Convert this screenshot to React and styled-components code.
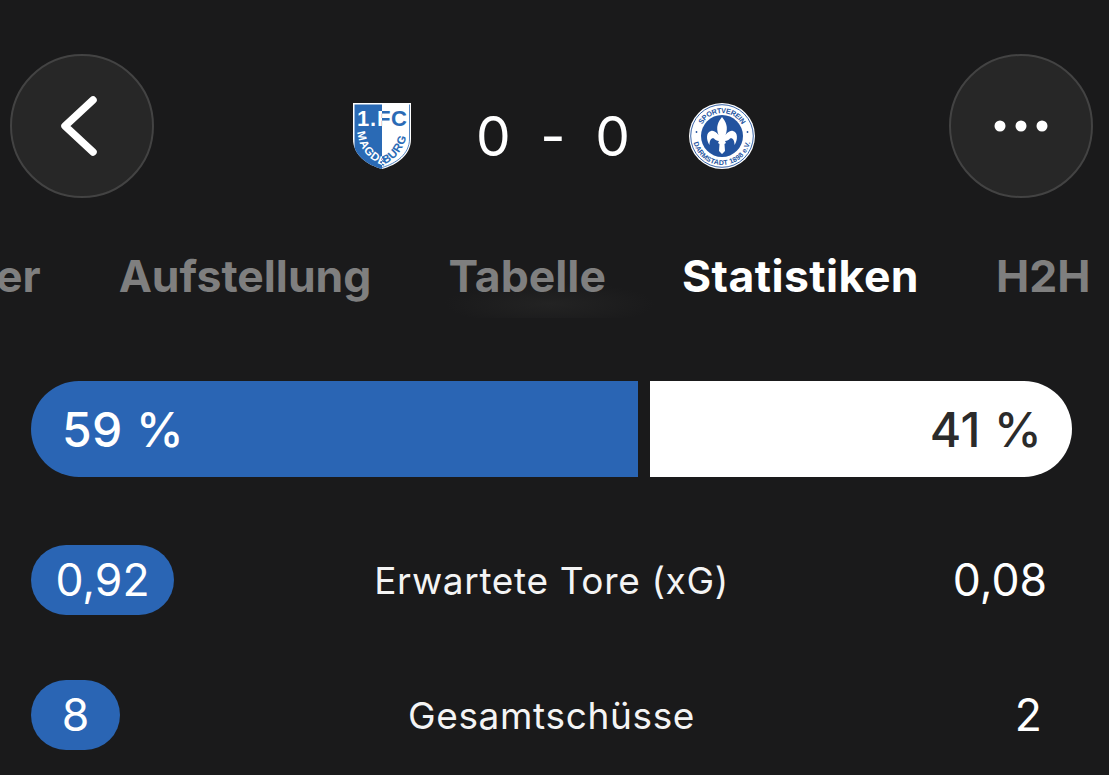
import React from "react";
import styled, { createGlobalStyle } from "styled-components";

const Global = createGlobalStyle`
  html, body { margin: 0; padding: 0; background: #1a1a1b; }
  body { font-family: Inter, "Noto Sans", "Liberation Sans", sans-serif; color: #fff; }
`;

const Page = styled.div`
  width: 1109px;
  height: 775px;
  overflow: hidden;
  background: #1a1a1b;
`;

const Header = styled.header`
  display: flex;
  align-items: center;
  justify-content: space-between;
  padding: 54px 16px 0 10px;
  height: 144px;
  box-sizing: content-box;
`;

const RoundButton = styled.button`
  width: 144px;
  height: 144px;
  border-radius: 50%;
  padding: 0;
  background: #272727;
  border: 2px solid #434343;
  box-sizing: border-box;
  display: flex;
  align-items: center;
  justify-content: center;
`;

const Score = styled.div`
  display: flex;
  align-items: center;
  margin-left: 5px;
  padding-top: 20px;
`;

const ScoreText = styled.div`
  display: flex;
  width: 155px;
  margin: 0 58px 0 65px;
  justify-content: space-between;
  align-items: center;
  font-size: 55px;
  font-weight: 400;
  letter-spacing: 1px;
  line-height: 1;
`;

const Tabs = styled.nav`
  display: flex;
  align-items: center;
  height: 84px;
  margin-top: 36px;
  background: radial-gradient(ellipse 105px 22px at 550px 70px, #232323 0%, #1a1a1b 100%);
  white-space: nowrap;
`;

const Tab = styled.span`
  font-size: 44.5px;
  font-weight: 700;
  line-height: 1;
  margin-left: ${(p) => p.$gap}px;
  color: ${(p) => (p.$active ? "#ffffff" : "#7f7f7f")};
  letter-spacing: ${(p) => (p.$active ? "0.45px" : "0")};
`;

const Possession = styled.div`
  display: flex;
  gap: 12px;
  margin: 63px 37px 0 31px;
  height: 96px;
`;

const Bar = styled.div`
  display: flex;
  align-items: center;
  box-sizing: border-box;
  font-size: 48px;
  font-weight: 500;
  letter-spacing: 0.4px;
  padding: ${(p) => (p.$home ? "0 31px" : "0 30px")};
  background: ${(p) => (p.$home ? "#2a65b4" : "#ffffff")};
  color: ${(p) => (p.$home ? "#ffffff" : "#2b2b2b")};
  border-radius: ${(p) => (p.$home ? "48px 0 0 48px" : "0 48px 48px 0")};
  justify-content: ${(p) => (p.$home ? "flex-start" : "flex-end")};
  width: ${(p) => p.$width}px;
`;

const StatRow = styled.div`
  display: grid;
  grid-template-columns: 260px 1fr 260px;
  align-items: center;
  height: 70px;
  padding: 0 62px 0 31px;
  margin-top: ${(p) => p.$top}px;
`;

const Pill = styled.div`
  justify-self: start;
  display: flex;
  align-items: center;
  justify-content: center;
  height: ${(p) => p.$h}px;
  width: ${(p) => p.$w}px;
  border-radius: 35px;
  background: #2a65b4;
  font-size: 44.5px;
  font-weight: 400;
`;

const StatLabel = styled.div`
  text-align: center;
  font-size: 37px;
  letter-spacing: 0.65px;
  font-weight: 400;
  color: #f4f4f4;
  margin-left: 25px;
`;

const StatValue = styled.div`
  text-align: right;
  font-size: 44.5px;
  font-weight: 400;
  color: #fff;
  margin-right: ${(p) => p.$mr}px;
`;

const Chevron = () => (
  <svg width="60" height="80" viewBox="0 0 60 80" fill="none">
    <path d="M41 14 L13 40 L41 66" stroke="#fff" strokeWidth="7.5" strokeLinecap="round" strokeLinejoin="round" />
  </svg>
);

const Dots = () => (
  <svg width="60" height="14" viewBox="0 0 60 14" fill="#fff">
    <circle cx="9" cy="7" r="5.5" />
    <circle cx="30" cy="7" r="5.5" />
    <circle cx="51" cy="7" r="5.5" />
  </svg>
);

const Shield = () => (
  <svg width="58" height="66" viewBox="0 0 58 66">
    <defs>
      <clipPath id="sh">
        <path d="M0 0 H58 V36 C58 52 44 62 29 66 C14 62 0 52 0 36 Z" />
      </clipPath>
      <linearGradient id="split" gradientUnits="userSpaceOnUse" x1="0" y1="0" x2="58" y2="0">
        <stop offset="0.5" stopColor="#ffffff" />
        <stop offset="0.5" stopColor="#2a6ab5" />
      </linearGradient>
      <path id="arc" d="M4 28 C6 47 18 58 29 62 C41 58 52 47 55 26" fill="none" />
    </defs>
    <g clipPath="url(#sh)">
      <rect x="0" y="0" width="58" height="66" fill="#fff" />
      <rect x="1.5" y="1.5" width="27.5" height="65" fill="#2a6ab5" />
    </g>
    <path d="M56.5 1.5 V36 C56.5 51 43 60.5 29 64.5" fill="none" stroke="#2a6ab5" strokeWidth="0.8" />
    <text x="4" y="23" fontFamily="Liberation Sans, sans-serif" fontWeight="700" fontSize="22" fill="url(#split)" textLength="50">1.FC</text>
    <text fontFamily="Liberation Sans, sans-serif" fontWeight="700" fontSize="11.5" fill="url(#split)">
      <textPath href="#arc" startOffset="1" textLength="82">MAGDEBURG</textPath>
    </text>
  </svg>
);

const Crest = () => (
  <svg width="66" height="66" viewBox="0 0 66 66">
    <defs>
      <path id="top" d="M10 33 A23 23 0 0 1 56 33" fill="none" />
      <path id="bot" d="M4 33 A29 29 0 0 0 62 33" fill="none" />
    </defs>
    <circle cx="33" cy="33" r="33" fill="#fff" />
    <circle cx="33" cy="33" r="31.3" fill="none" stroke="#22539f" strokeWidth="0.9" />
    <circle cx="33" cy="33" r="21" fill="#22539f" />
    <circle cx="7.5" cy="29" r="0.9" fill="#22539f" />
    <circle cx="58.5" cy="29" r="0.9" fill="#22539f" />
    <text fontFamily="Liberation Sans, sans-serif" fontWeight="700" fontSize="7.2" fill="#22539f">
      <textPath href="#top" startOffset="12" textLength="48">SPORTVEREIN</textPath>
    </text>
    <text fontFamily="Liberation Sans, sans-serif" fontWeight="700" fontSize="7" fill="#22539f">
      <textPath href="#bot" startOffset="6.5" textLength="78">DARMSTADT 1898 e.V.</textPath>
    </text>
    <path
      fill="#fff"
      d="M33 14 C37 19 39.5 24 36.5 32 C38 30 41 27 44 28 C49 29 49 37 45.5 42 C45.5 37 43.5 34.5 41 35.5 C40 37 38 38 36 38 L37 40 L35.5 41 L36 48 L33 51 L30 48 L30.5 41 L29 40 L30 38 C28 38 26 37 25 35.5 C22.5 34.5 20.5 37 20.5 42 C17 37 17 29 22 28 C25 27 28 30 29.5 32 C26.5 24 29 19 33 14 Z"
    />
  </svg>
);

export default function App() {
  return (
    <Page>
      <Global />
      <Header>
        <RoundButton aria-label="Zurück"><Chevron /></RoundButton>
        <Score>
          <Shield />
          <ScoreText><span>0</span><span>-</span><span>0</span></ScoreText>
          <Crest />
        </Score>
        <RoundButton aria-label="Mehr"><Dots /></RoundButton>
      </Header>
      <Tabs>
        <Tab $gap={-4}>er</Tab>
        <Tab $gap={78}>Aufstellung</Tab>
        <Tab $gap={77}>Tabelle</Tab>
        <Tab $gap={76} $active>Statistiken</Tab>
        <Tab $gap={77}>H2H</Tab>
      </Tabs>
      <Possession>
        <Bar $home $width={607}>59 %</Bar>
        <Bar $width={422}>41 %</Bar>
      </Possession>
      <StatRow $top={68}>
        <Pill $w={143} $h={70}>0,92</Pill>
        <StatLabel>Erwartete Tore (xG)</StatLabel>
        <StatValue $mr={0}>0,08</StatValue>
      </StatRow>
      <StatRow $top={65}>
        <Pill $w={89} $h={70}>8</Pill>
        <StatLabel>Gesamtschüsse</StatLabel>
        <StatValue $mr={5}>2</StatValue>
      </StatRow>
    </Page>
  );
}
